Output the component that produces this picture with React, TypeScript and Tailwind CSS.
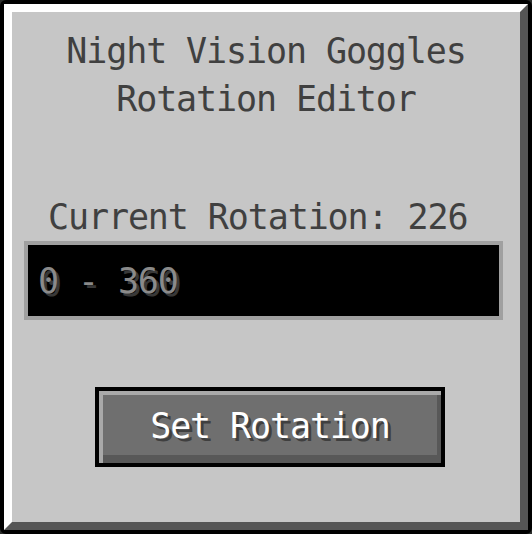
import React from "react";

const mc = { fontFamily: '"DejaVu Sans Mono", "Liberation Mono", monospace' };

export default function App() {
  return (
    <div className="w-[532px] h-[534px] bg-[#2b2d2b]">
      {/* Panel frame */}
      <div className="w-full h-full rounded-[6px] border-4 border-black bg-[#c6c6c6]">
        <div
          className="h-full border-t-8 border-l-8 border-r-8 border-b-8 border-t-white border-l-white border-r-[#555555] border-b-[#555555] flex flex-col text-[35px] leading-[48px] tracking-[-1.1px]"
          style={mc}
        >
          <div className="pt-[15px] text-center text-[#404040]">
            <div>Night Vision Goggles</div>
            <div>Rotation Editor</div>
          </div>

          <div className="mt-[70px] pl-[36px] text-[#404040] whitespace-nowrap">Current Rotation: 226</div>

          {/* Text field */}
          <div className="ml-[12px] w-[479px] h-[79px] border-4 border-[#a0a0a0] bg-black flex items-center pl-[10px]">
            <span className="text-[#8a8a8a] [text-shadow:3px_3px_0_#383838]">0 - 360</span>
          </div>

          {/* Button */}
          <div className="mt-[67px] ml-[83px] w-[350px] h-[80px] border-4 border-black">
            <div className="h-full bg-[#6f6f6f] shadow-[inset_4px_4px_0_#a9a9a9,inset_-4px_-8px_0_#585858] flex items-center justify-center pb-[2px]">
              <span className="text-white [text-shadow:3px_3px_0_#3f3f3f]">Set Rotation</span>
            </div>
          </div>
        </div>
      </div>
    </div>
  );
}
